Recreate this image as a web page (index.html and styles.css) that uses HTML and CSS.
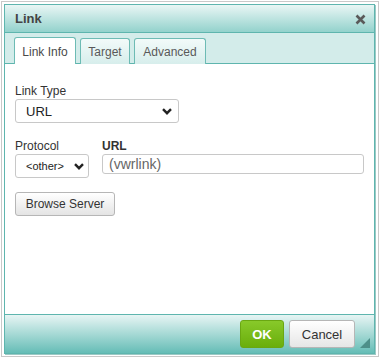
FILE: index.html
```html
<!DOCTYPE html>
<html>
<head>
<meta charset="utf-8">
<link rel="stylesheet" href="styles.css">
</head>
<body>
<div class="frame">
  <div class="dialog">
    <div class="titlebar">
      <span class="title">Link</span>
      <span class="close" aria-label="Close">
        <svg width="11" height="11" viewBox="0 0 11 11"><path d="M1.5 1.5 L9.5 9.5 M9.5 1.5 L1.5 9.5" stroke="#5a5a5a" stroke-width="2.6" stroke-linecap="butt"/></svg>
      </span>
    </div>
    <div class="tabs">
      <div class="tab active t1">Link Info</div>
      <div class="tab t2">Target</div>
      <div class="tab t3">Advanced</div>
    </div>
    <div class="content">
      <div class="field">
        <label class="lbl">Link Type</label>
        <div class="select wide"><span>URL</span><svg class="chev" width="10" height="7" viewBox="0 0 10 7"><path d="M1 1.2 L5 5.2 L9 1.2" fill="none" stroke="#222" stroke-width="2.4"/></svg></div>
      </div>
      <div class="row">
        <div class="field">
          <label class="lbl">Protocol</label>
          <div class="select proto"><span>&lt;other&gt;</span><svg class="chev" width="10" height="7" viewBox="0 0 10 7"><path d="M1 1.2 L5 5.2 L9 1.2" fill="none" stroke="#222" stroke-width="2.4"/></svg></div>
        </div>
        <div class="field grow">
          <label class="lbl bold">URL</label>
          <div class="input">(vwrlink)</div>
        </div>
      </div>
      <div class="btn browse">Browse Server</div>
    </div>
    <div class="footer">
      <div class="btn ok">OK</div>
      <div class="btn cancel">Cancel</div>
      <span class="resize"></span>
    </div>
  </div>
</div>
</body>
</html>
```
FILE: styles.css
```css
* { box-sizing: border-box; }
html, body { margin: 0; padding: 0; background: #fff; }
body { font-family: "Liberation Sans", Arial, sans-serif; font-size: 12px; color: #333; }
.frame {
  margin: 1px 0 0 1px;
  width: 378px;
  height: 356px;
  border: 1px solid #c9c9c9;
  padding: 2px 2px 0 2px;
}
.dialog {
  width: 371px;
  height: 350px;
  border: 1px solid #5eb5ae;
  box-shadow: 1px 1px 0 #9cc9c5;
  display: flex;
  flex-direction: column;
  background: #fff;
}
.titlebar {
  height: 28px;
  flex: none;
  background: linear-gradient(#e9f6f5, #93d2cc);
  border-bottom: 1px solid #5eb5ae;
  display: flex;
  align-items: center;
  justify-content: space-between;
  padding: 0 8px 0 10px;
}
.title { font-weight: bold; font-size: 13px; color: #444; }
.close { display: flex; width: 11px; height: 11px; margin-top: 1px; }
.tabs {
  height: 31px;
  flex: none;
  background: #d3ecea;
  border-bottom: 1px solid #5eb5ae;
  display: flex;
  align-items: flex-end;
  padding-left: 9px;
  gap: 4px;
}
.tab {
  height: 26px;
  margin-bottom: -1px;
  border: 1px solid #6dbbb4;
  border-bottom: none;
  border-radius: 3px 3px 0 0;
  background: linear-gradient(#f2faf9, #d7eeec);
  color: #595959;
  display: flex;
  align-items: center;
  justify-content: center;
  padding-top: 1px;
}
.tab.active { background: #fff; height: 27px; color: #4a4a4a; }
.t1 { width: 62px; }
.t2 { width: 50px; }
.t3 { width: 72px; }
.content {
  flex: 1;
  padding: 20px 10px 0 10px;
}
.field { display: flex; flex-direction: column; }
.lbl { color: #333; line-height: 14px; height: 14px; margin-bottom: 1px; }
.lbl.bold { font-weight: bold; }
.select {
  height: 24px;
  border: 1px solid #c8c8c8;
  border-radius: 3px;
  background: #fff;
  display: flex;
  align-items: center;
  justify-content: space-between;
  padding: 0 6px 0 10px;
  color: #222;
  font-size: 13px;
}
.select.wide { width: 164px; }
.select.proto { width: 74px; font-size: 11px; padding: 0 4px 0 10px; }
.chev { flex: none; }
.row { display: flex; gap: 13px; margin-top: 16px; }
.grow { flex: 1; }
.input {
  height: 20px;
  border: 1px solid #c8c8c8;
  border-radius: 3px;
  padding: 0 6px;
  display: flex;
  align-items: center;
  color: #666;
  font-size: 14px;
}
.btn {
  display: flex;
  align-items: center;
  justify-content: center;
  border-radius: 3px;
  font-size: 12px;
}
.browse {
  margin-top: 14px;
  width: 100px;
  height: 24px;
  border: 1px solid #b6b6b6;
  background: linear-gradient(#fff, #e4e4e4);
  color: #333;
}
.footer {
  height: 39px;
  flex: none;
  border-top: 1px solid #5eb5ae;
  background: linear-gradient(#e7f5f4, #65bdb6);
  display: flex;
  align-items: center;
  justify-content: flex-end;
  padding-right: 19px;
  gap: 5px;
  position: relative;
}
.ok {
  width: 44px;
  height: 28px;
  border: 1px solid #6aa712;
  background: linear-gradient(#88c92a, #6aae0c);
  color: #fff;
  font-weight: bold;
  font-size: 13px;
}
.cancel {
  width: 66px;
  height: 28px;
  border: 1px solid #b6b6b6;
  background: linear-gradient(#fff, #e6e6e6);
  color: #333;
  font-size: 13px;
}
.resize {
  position: absolute;
  right: 4px;
  bottom: 5px;
  width: 0;
  height: 0;
  border-left: 10px solid transparent;
  border-bottom: 10px solid #4d8f89;
}
```
